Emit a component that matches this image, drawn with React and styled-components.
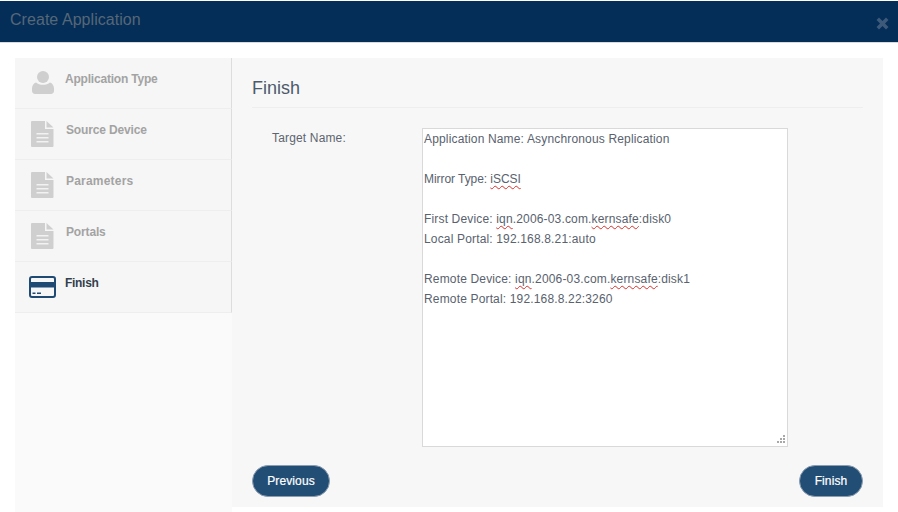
import React from 'react';
import styled, { createGlobalStyle } from 'styled-components';

const GlobalStyle = createGlobalStyle`
  html, body {
    margin: 0;
    padding: 0;
    background: #ffffff;
    font-family: "Liberation Sans", Arial, sans-serif;
  }
`;

const Page = styled.div`
  width: 898px;
  height: 512px;
  overflow: hidden;
  display: flex;
  flex-direction: column;
`;

const Header = styled.header`
  height: 41px;
  margin-top: 1px;
  padding: 0 9px 0 10px;
  border-bottom: 1px solid #d8dadc;
  background: #042e57;
  display: flex;
  align-items: center;
  justify-content: space-between;
`;

const Title = styled.h4`
  margin: 0 0 4px;
  font-size: 16px;
  font-weight: normal;
  letter-spacing: 0.05px;
  color: #566778;
`;

const CloseIcon = styled.svg`
  width: 13px;
  height: 13px;
  margin-top: 3px;
  fill: #3d5a7a;
`;

const Body = styled.div`
  flex: 1;
  display: flex;
  padding: 15px 15px 0;
  min-height: 0;
`;

const Sidebar = styled.nav`
  width: 217px;
  flex-shrink: 0;
  background: #fafafa;
`;

const Step = styled.div`
  height: 50px;
  display: flex;
  background: #f6f6f6;
  border-bottom: 1px solid #eeeeee;
  border-right: 1px solid #dddddd;
`;

const StepIcon = styled.div`
  width: 50px;
  padding-top: ${(props) => props.$top}px;
  padding-left: ${(props) => props.$shift}px;
  display: flex;
  justify-content: center;
  align-items: flex-start;
  box-sizing: border-box;
`;

const StepLabel = styled.span`
  padding-top: 14px;
  margin-left: ${(props) => props.$indent || 0}px;
  font-size: 12px;
  font-weight: bold;
  line-height: 14px;
  letter-spacing: ${(props) => props.$spacing}px;
  color: ${(props) => (props.$active ? '#333f4d' : '#a3a3a3')};
`;

const Main = styled.main`
  flex: 1;
  height: 449px;
  padding: 0 20px;
  background: #f7f7f7;
  display: flex;
  flex-direction: column;
`;

const PanelTitle = styled.h3`
  margin: 0;
  height: 50px;
  box-sizing: border-box;
  padding-top: 19px;
  border-bottom: 1px solid #eeeeee;
  font-size: 18px;
  line-height: 22px;
  font-weight: normal;
  color: #4d5a6c;
`;

const FormRow = styled.div`
  display: flex;
  margin-top: 20px;
`;

const FieldLabel = styled.label`
  width: 170px;
  padding: 3px 0 0 20px;
  box-sizing: border-box;
  font-size: 12px;
  line-height: 14px;
  letter-spacing: 0.16px;
  color: #5c6570;
`;

const Summary = styled.div`
  position: relative;
  width: 366px;
  height: 319px;
  box-sizing: border-box;
  padding: 0 1px;
  border: 1px solid #d9d9d9;
  background: #ffffff;
  font-size: 12px;
  line-height: 20px;
  letter-spacing: 0.16px;
  color: #59626e;
`;

const Line = styled.div`
  height: 20px;
  white-space: pre;
  letter-spacing: ${(props) => (props.$spacing === undefined ? 'inherit' : `${props.$spacing}px`)};
`;

const Misspelled = styled.span`
  text-decoration: underline wavy #d9312b 1.3px;
  text-underline-offset: 2px;
  text-decoration-skip-ink: none;
`;

const Grip = styled.svg`
  position: absolute;
  right: 2px;
  bottom: 2px;
  width: 9px;
  height: 9px;
  fill: #a8a8a8;
`;

const Actions = styled.div`
  display: flex;
  justify-content: space-between;
  margin-top: 18px;
`;

const Pill = styled.button`
  height: 32px;
  width: ${(props) => props.$width}px;
  padding: 0;
  border: 1px solid #8b9db0;
  border-radius: 16px;
  background: #224d75;
  color: #ffffff;
  font-family: "Liberation Sans", Arial, sans-serif;
  font-size: 12px;
  letter-spacing: 0.12px;
  -webkit-text-stroke: 0.2px #ffffff;
`;

const UserIcon = () => (
  <svg width="22" height="23" viewBox="0 0 22 23" fill="#cfcfcf">
    <circle cx="11" cy="6" r="6" />
    <path d="M4 11.5c1.8 1.5 4.3 2.3 7 2.3s5.2-.8 7-2.3c2.4.8 4 3 4 6v2.5c0 1.6-1.3 3-3 3H3c-1.7 0-3-1.4-3-3v-2.5c0-3 1.6-5.2 4-6z" />
  </svg>
);

const FileIcon = () => (
  <svg width="23" height="26" viewBox="0 0 23 26">
    <path fill="#cfcfcf" d="M1 0h13v8h8.500v17a1 1 0 0 1-1 1H1a1 1 0 0 1-1-1V1a1 1 0 0 1 1-1z" />
    <path fill="#cfcfcf" d="M15.500 0l7 6.500h-7z" />
    <path fill="#f2f2f2" d="M5.500 12h12v1.600h-12zM5.500 16h12v1.600h-12zM5.500 20h12v1.600h-12z" />
  </svg>
);

const CardIcon = () => (
  <svg width="27" height="22" viewBox="0 0 27 22">
    <rect x="1" y="1" width="25" height="20" rx="2" fill="#f6f6f6" stroke="#1f4a73" strokeWidth="2" />
    <path fill="#1f4a73" d="M1 6h25v5.500H1zM3.500 16.500h3v1.500h-3zM8 16.500h4v1.500H8z" />
  </svg>
);

const steps = [
  { label: 'Application Type', icon: <UserIcon />, top: 13, shift: 6, spacing: -0.2 },
  { label: 'Source Device', icon: <FileIcon />, top: 12, shift: 4, indent: 1, spacing: -0.15 },
  { label: 'Parameters', icon: <FileIcon />, top: 12, shift: 4, indent: 1, spacing: 0.2 },
  { label: 'Portals', icon: <FileIcon />, top: 12, shift: 4, indent: 1, spacing: -0.15 },
  { label: 'Finish', icon: <CardIcon />, top: 14, shift: 4, spacing: -0.3, active: true },
];

const App = () => {
  return (
    <Page>
      <GlobalStyle />
      <Header>
        <Title>Create Application</Title>
        <CloseIcon viewBox="0 0 13 13">
          <path d="M3 .5l3.500 3.500L10 .5 12.500 3 9 6.500l3.500 3.500-2.500 2.500L6.500 9 3 12.500.5 10 4 6.500.5 3z" />
        </CloseIcon>
      </Header>
      <Body>
        <Sidebar>
          {steps.map((step) => (
            <Step key={step.label}>
              <StepIcon $top={step.top} $shift={step.shift}>{step.icon}</StepIcon>
              <StepLabel $active={step.active} $indent={step.indent} $spacing={step.spacing}>
                {step.label}
              </StepLabel>
            </Step>
          ))}
        </Sidebar>
        <Main>
          <PanelTitle>Finish</PanelTitle>
          <FormRow>
            <FieldLabel>Target Name:</FieldLabel>
            <Summary>
              <Line>Application Name: Asynchronous Replication</Line>
              <Line> </Line>
              <Line $spacing={-0.06}>
                Mirror Type: <Misspelled>iSCSI</Misspelled>
              </Line>
              <Line> </Line>
              <Line>
                First Device: <Misspelled>iqn</Misspelled>.2006-03.com.
                <Misspelled>kernsafe</Misspelled>:disk0
              </Line>
              <Line>Local Portal: 192.168.8.21:auto</Line>
              <Line> </Line>
              <Line>
                Remote Device: <Misspelled>iqn</Misspelled>.2006-03.com.
                <Misspelled>kernsafe</Misspelled>:disk1
              </Line>
              <Line>Remote Portal: 192.168.8.22:3260</Line>
              <Grip viewBox="0 0 9 9">
                <path d="M7 0h2v2H7zM4 3h2v2H4zM7 3h2v2H7zM1 6h2v2H1zM4 6h2v2H4zM7 6h2v2H7z" />
              </Grip>
            </Summary>
          </FormRow>
          <Actions>
            <Pill $width={78}>Previous</Pill>
            <Pill $width={64}>Finish</Pill>
          </Actions>
        </Main>
      </Body>
    </Page>
  );
};

export default App;
